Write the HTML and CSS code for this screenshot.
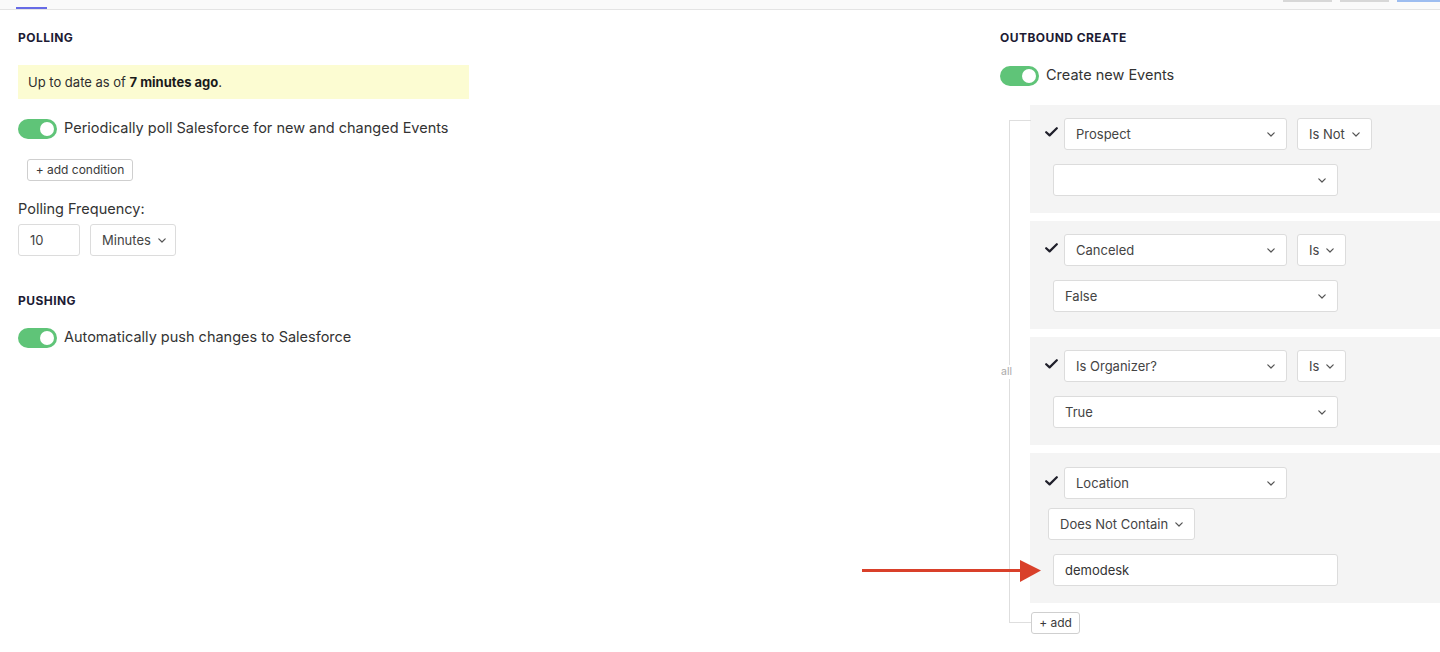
FILE: index.html
```html
<!DOCTYPE html>
<html lang="en">
<head>
<meta charset="utf-8">
<title>Sync settings — Events</title>
<link rel="stylesheet" href="styles.css">
</head>
<body>
<header class="topbar">
  <nav class="tabs">
    <span class="tab tab-active"></span>
  </nav>
  <div class="top-actions">
    <span class="stub"></span>
    <span class="stub"></span>
    <span class="stub stub-primary"></span>
  </div>
</header>

<main class="page">
  <section class="col col-left">
    <h2 class="heading">Polling</h2>
    <div class="notice">Up to date as of <strong>7 minutes ago</strong>.</div>

    <label class="switch-row">
      <span class="switch"><span class="knob"></span></span>
      <span class="switch-label">Periodically poll Salesforce for new and changed Events</span>
    </label>

    <button class="btn-small btn-add-condition">+ add condition</button>

    <div class="field-label">Polling Frequency:</div>
    <div class="freq-row">
      <div class="input input-freq">10</div>
      <div class="select select-inline">Minutes
        <svg class="chev" viewBox="0 0 8 5" width="8" height="5"><path d="M0.8 0.8 L4 4 L7.2 0.8" fill="none" stroke="currentColor" stroke-width="1.2" stroke-linecap="round" stroke-linejoin="round"/></svg>
      </div>
    </div>

    <h2 class="heading heading-push">Pushing</h2>
    <label class="switch-row switch-row-push">
      <span class="switch"><span class="knob"></span></span>
      <span class="switch-label">Automatically push changes to Salesforce</span>
    </label>
  </section>

  <section class="col col-right">
    <h2 class="heading">Outbound Create</h2>
    <label class="switch-row switch-row-create">
      <span class="switch"><span class="knob"></span></span>
      <span class="switch-label">Create new Events</span>
    </label>

    <div class="cond-tree">
      <span class="tree-mode">all</span>

      <div class="cond">
        <div class="cond-row">
          <svg class="check" viewBox="0 0 13 10" width="13" height="10"><path d="M1.2 5.2 L4.6 8.4 L11.8 1.2" fill="none" stroke="#1f1f2a" stroke-width="2.2" stroke-linecap="round" stroke-linejoin="round"/></svg>
          <div class="select select-field">Prospect
            <svg class="chev" viewBox="0 0 8 5" width="8" height="5"><path d="M0.8 0.8 L4 4 L7.2 0.8" fill="none" stroke="currentColor" stroke-width="1.2" stroke-linecap="round" stroke-linejoin="round"/></svg>
          </div>
          <div class="select select-inline">Is Not
            <svg class="chev" viewBox="0 0 8 5" width="8" height="5"><path d="M0.8 0.8 L4 4 L7.2 0.8" fill="none" stroke="currentColor" stroke-width="1.2" stroke-linecap="round" stroke-linejoin="round"/></svg>
          </div>
        </div>
        <div class="select select-value">
          <svg class="chev" viewBox="0 0 8 5" width="8" height="5"><path d="M0.8 0.8 L4 4 L7.2 0.8" fill="none" stroke="currentColor" stroke-width="1.2" stroke-linecap="round" stroke-linejoin="round"/></svg>
        </div>
      </div>

      <div class="cond">
        <div class="cond-row">
          <svg class="check" viewBox="0 0 13 10" width="13" height="10"><path d="M1.2 5.2 L4.6 8.4 L11.8 1.2" fill="none" stroke="#1f1f2a" stroke-width="2.2" stroke-linecap="round" stroke-linejoin="round"/></svg>
          <div class="select select-field">Canceled
            <svg class="chev" viewBox="0 0 8 5" width="8" height="5"><path d="M0.8 0.8 L4 4 L7.2 0.8" fill="none" stroke="currentColor" stroke-width="1.2" stroke-linecap="round" stroke-linejoin="round"/></svg>
          </div>
          <div class="select select-inline">Is
            <svg class="chev" viewBox="0 0 8 5" width="8" height="5"><path d="M0.8 0.8 L4 4 L7.2 0.8" fill="none" stroke="currentColor" stroke-width="1.2" stroke-linecap="round" stroke-linejoin="round"/></svg>
          </div>
        </div>
        <div class="select select-value">False
          <svg class="chev" viewBox="0 0 8 5" width="8" height="5"><path d="M0.8 0.8 L4 4 L7.2 0.8" fill="none" stroke="currentColor" stroke-width="1.2" stroke-linecap="round" stroke-linejoin="round"/></svg>
        </div>
      </div>

      <div class="cond">
        <div class="cond-row">
          <svg class="check" viewBox="0 0 13 10" width="13" height="10"><path d="M1.2 5.2 L4.6 8.4 L11.8 1.2" fill="none" stroke="#1f1f2a" stroke-width="2.2" stroke-linecap="round" stroke-linejoin="round"/></svg>
          <div class="select select-field">Is Organizer?
            <svg class="chev" viewBox="0 0 8 5" width="8" height="5"><path d="M0.8 0.8 L4 4 L7.2 0.8" fill="none" stroke="currentColor" stroke-width="1.2" stroke-linecap="round" stroke-linejoin="round"/></svg>
          </div>
          <div class="select select-inline">Is
            <svg class="chev" viewBox="0 0 8 5" width="8" height="5"><path d="M0.8 0.8 L4 4 L7.2 0.8" fill="none" stroke="currentColor" stroke-width="1.2" stroke-linecap="round" stroke-linejoin="round"/></svg>
          </div>
        </div>
        <div class="select select-value">True
          <svg class="chev" viewBox="0 0 8 5" width="8" height="5"><path d="M0.8 0.8 L4 4 L7.2 0.8" fill="none" stroke="currentColor" stroke-width="1.2" stroke-linecap="round" stroke-linejoin="round"/></svg>
        </div>
      </div>

      <div class="cond cond-text">
        <div class="cond-row">
          <svg class="check" viewBox="0 0 13 10" width="13" height="10"><path d="M1.2 5.2 L4.6 8.4 L11.8 1.2" fill="none" stroke="#1f1f2a" stroke-width="2.2" stroke-linecap="round" stroke-linejoin="round"/></svg>
          <div class="select select-field">Location
            <svg class="chev" viewBox="0 0 8 5" width="8" height="5"><path d="M0.8 0.8 L4 4 L7.2 0.8" fill="none" stroke="currentColor" stroke-width="1.2" stroke-linecap="round" stroke-linejoin="round"/></svg>
          </div>
        </div>
        <div class="select select-inline select-op">Does Not Contain
          <svg class="chev" viewBox="0 0 8 5" width="8" height="5"><path d="M0.8 0.8 L4 4 L7.2 0.8" fill="none" stroke="currentColor" stroke-width="1.2" stroke-linecap="round" stroke-linejoin="round"/></svg>
        </div>
        <div class="value-wrap">
          <svg class="pointer" viewBox="0 0 180 24" width="180" height="24"><path d="M0 11.5 H160" stroke="#d9402a" stroke-width="3.2"/><path d="M158 1 L179 11.5 L158 23 Z" fill="#d9402a"/></svg>
          <div class="input select-value input-value">demodesk</div>
        </div>
      </div>

      <button class="btn-small btn-add">+ add</button>
    </div>
  </section>
</main>
</body>
</html>
```

FILE: styles.css
```css
* {
  box-sizing: border-box;
}

html, body {
  margin: 0;
  background: #ffffff;
}

body {
  font-family: Inter, "Noto Sans", "Liberation Sans", sans-serif;
  color: #333333;
  font-size: 13px;
  overflow: hidden;
}

/* top strip with the active tab marker and the action buttons' edges */
.topbar {
  height: 10px;
  background: #fafafa;
  border-bottom: 1px solid #e4e4e4;
  display: flex;
  justify-content: space-between;
}

.tabs {
  display: flex;
  padding-left: 16px;
}

.tab {
  width: 31px;
  height: 9px;
}

.tab-active {
  border-bottom: 2px solid #676be6;
}

.top-actions {
  display: flex;
  gap: 8px;
  align-items: flex-start;
}

.stub {
  width: 49px;
  height: 2px;
  background: #d8d8d8;
}

.stub-primary {
  width: 43px;
  background: #9dbdf0;
}

/* two-column layout */
.page {
  display: grid;
  grid-template-columns: 1fr 440px;
  padding-left: 18px;
}

.col {
  display: flex;
  flex-direction: column;
  align-items: flex-start;
  padding-top: 20px;
}

.heading {
  margin: 0;
  font-size: 12px;
  line-height: 16px;
  font-weight: 700;
  text-transform: uppercase;
  letter-spacing: 0.45px;
  color: #1d1b34;
}

.notice {
  margin-top: 19px;
  width: 451px;
  height: 34px;
  line-height: 34px;
  padding: 0 10px;
  background: #fcfcd2;
  font-size: 13px;
  color: #2e2e2e;
}

.notice strong {
  font-weight: 700;
  color: #1a1a1a;
}

/* toggle switches */
.switch-row {
  margin-top: 20px;
  display: flex;
  align-items: center;
  gap: 7px;
  height: 20px;
}

.switch-row-push {
  margin-top: 19px;
}

.switch-row-create {
  margin-top: 19px;
  height: 21px;
}

.switch {
  width: 39px;
  height: 20px;
  border-radius: 10px;
  background: #5fc478;
  display: flex;
  align-items: center;
  justify-content: flex-end;
  padding-right: 3px;
}

.knob {
  width: 14px;
  height: 14px;
  border-radius: 50%;
  background: #ffffff;
}

.switch-label {
  font-size: 14.5px;
  line-height: 18px;
  margin-top: -2px;
  color: #333333;
}

/* small outlined buttons */
.btn-small {
  font-family: inherit;
  font-size: 12px;
  color: #3a3a3a;
  background: #ffffff;
  border: 1px solid #cfcfcf;
  border-radius: 3px;
  height: 22px;
  padding: 0 9px;
  line-height: 20px;
}

.btn-add-condition {
  margin-top: 20px;
  margin-left: 9px;
  width: 106px;
  padding: 0;
}

.field-label {
  margin-top: 18px;
  font-size: 14.5px;
  line-height: 20px;
  color: #333333;
}

.freq-row {
  margin-top: 5px;
  display: flex;
  gap: 10px;
}

/* inputs and dropdowns */
.input,
.select {
  height: 32px;
  background: #ffffff;
  border: 1px solid #dcdcdc;
  border-radius: 3px;
  display: flex;
  align-items: center;
  font-size: 13px;
  color: #444444;
}

.input-freq {
  width: 62px;
  padding-left: 11px;
}

.select-inline {
  padding: 0 11px 0 11px;
  gap: 7px;
}

.col-left .select-inline {
  width: 86px;
}

.chev {
  color: #555555;
  flex: none;
}

.select-field {
  width: 223px;
  padding: 0 11px 0 11px;
  justify-content: space-between;
}

.select-value {
  width: 285px;
  padding: 0 11px;
  justify-content: space-between;
}

.select-value .chev {
  margin-left: auto;
}

.heading-push {
  margin-top: 37px;
}

/* condition tree */
.cond-tree {
  position: relative;
  margin-top: 19px;
  width: 100%;
  padding-left: 30px;
  display: flex;
  flex-direction: column;
  gap: 8px;
  align-items: flex-start;
}

.cond-tree::before {
  content: "";
  position: absolute;
  left: 9px;
  top: 15px;
  bottom: 11px;
  width: 21px;
  border: 1px solid #dedede;
  border-right: none;
}

.tree-mode {
  position: absolute;
  left: 1px;
  top: 260px;
  background: #ffffff;
  font-size: 10.5px;
  line-height: 12px;
  color: #a9a9a9;
  padding: 1px 0;
}

.cond {
  width: 100%;
  background: #f4f4f4;
  padding: 13px 0 17px 15px;
  display: flex;
  flex-direction: column;
  align-items: flex-start;
  gap: 14px;
}

.cond-row {
  display: flex;
  align-items: flex-start;
  gap: 10px;
}

.check {
  margin-top: 9px;
  margin-right: -4px;
  flex: none;
}

.cond > .select-value {
  margin-left: 8px;
}

.cond-text {
  padding-top: 14px;
  gap: 9px;
}

.select-op {
  margin-left: 3px;
}

.value-wrap {
  position: relative;
  margin-top: 5px;
  margin-left: 8px;
}

.input-value {
  color: #333333;
}

.pointer {
  position: absolute;
  left: -191px;
  top: 5px;
}

.btn-add {
  margin-top: 1px;
  margin-left: 1px;
  height: 22px;
  width: 49px;
  padding: 0;
}
```
